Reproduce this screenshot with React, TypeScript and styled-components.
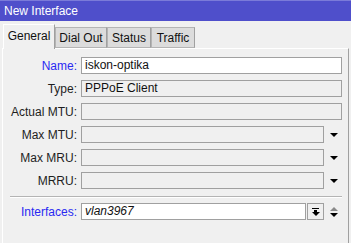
import React from "react";
import styled, { createGlobalStyle } from "styled-components";

const Global = createGlobalStyle`
  html, body { margin: 0; padding: 0; background: #f0f0f0; }
  body { font-family: "Liberation Sans", Arial, sans-serif; font-size: 11px; color: #1e1e1e; }
`;

const Window = styled.div`
  width: 351px;
  height: 243px;
  overflow: hidden;
  background: #f0f0f0;
  display: flex;
  flex-direction: column;
`;

const TitleBar = styled.div`
  height: 20px;
  border-top: 1px solid #7b7bd9;
  background: #4f4fcb;
  color: #fff;
  font-size: 12px;
  line-height: 20px;
  padding-left: 4px;
  flex: none;
`;

const TabStrip = styled.div`
  height: 27px;
  display: flex;
  align-items: flex-end;
  padding-left: 3px;
  flex: none;
  position: relative;
  z-index: 1;
`;

const Tab = styled.div<{ $active?: boolean; $w: number }>`
  box-sizing: border-box;
  width: ${(p) => p.$w}px;
  height: ${(p) => (p.$active ? 25 : 21)}px;
  margin-bottom: ${(p) => (p.$active ? -1 : 0)}px;
  background: ${(p) => (p.$active ? "#f0f0f0" : "#dcdcdc")};
  border: 1px solid ${(p) => (p.$active ? "#ffffff" : "#b4b4b4")};
  border-right-color: #a0a0a0;
  border-bottom: ${(p) => (p.$active ? "none" : "1px solid #b4b4b4")};
  display: flex;
  align-items: center;
  justify-content: center;
  font-size: 12px;
  color: #111;
  padding-bottom: ${(p) => (p.$active ? 2 : 0)}px;
`;

const Panel = styled.div`
  flex: 1;
  margin: 0 2px 0 2px;
  border-top: 1px solid #ffffff;
  border-left: 1px solid #ffffff;
  border-right: 1px solid #a0a0a0;
  padding: 8px 6px 0 0;
  display: flex;
  flex-direction: column;
  gap: 6px;
`;

const Row = styled.div`
  display: grid;
  grid-template-columns: 74px 1fr;
  column-gap: 4px;
  align-items: center;
  height: 17px;
`;

const Label = styled.div<{ $link?: boolean }>`
  text-align: right;
  font-size: 12px;
  color: ${(p) => (p.$link ? "#2a2af2" : "#1e1e1e")};
  white-space: nowrap;
`;

const Field = styled.div`
  display: flex;
  align-items: center;
  height: 17px;
`;

const Input = styled.div<{ $white?: boolean; $italic?: boolean }>`
  box-sizing: border-box;
  height: 17px;
  flex: 1;
  border: 1px solid #a0a0a0;
  background: ${(p) => (p.$white ? "#ffffff" : "#f0f0f0")};
  font-size: 12px;
  font-style: ${(p) => (p.$italic ? "italic" : "normal")};
  color: #111;
  padding-left: 3px;
  line-height: 15px;
  white-space: nowrap;
`;

const ArrowCell = styled.div`
  width: 18px;
  flex: none;
  display: flex;
  flex-direction: column;
  align-items: center;
  justify-content: center;
  gap: 2px;
  padding-left: 2px;
  box-sizing: border-box;
`;

const Tri = styled.div<{ $up?: boolean; $color?: string }>`
  width: 0;
  height: 0;
  border-left: 4px solid transparent;
  border-right: 4px solid transparent;
  ${(p) =>
    p.$up
      ? `border-bottom: 4px solid ${p.$color || "#000"};`
      : `border-top: 4px solid ${p.$color || "#000"};`}
`;

const IconButton = styled.div`
  box-sizing: border-box;
  width: 17px;
  height: 17px;
  margin-left: 1px;
  flex: none;
  border: 1px solid #a0a0a0;
  background: #f0f0f0;
  display: flex;
  flex-direction: column;
  align-items: center;
  justify-content: center;
  gap: 1px;
`;

const Bar = styled.div`
  width: 7px;
  height: 1px;
  background: #000;
`;

const Stem = styled.div`
  display: flex;
  flex-direction: column;
  align-items: center;
`;

const StemLine = styled.div`
  width: 3px;
  height: 2px;
  background: #000;
`;

const Separator = styled.div`
  margin: 1px 0 -1px 7px;
  height: 0;
  border-top: 1px solid #b4b4b4;
  border-bottom: 1px solid #ffffff;
`;

const tabs = [
  { name: "General", w: 52, active: true },
  { name: "Dial Out", w: 52 },
  { name: "Status", w: 44 },
  { name: "Traffic", w: 44 },
];

export default function App() {
  return (
    <Window>
      <Global />
      <TitleBar>New Interface</TitleBar>
      <TabStrip>
        {tabs.map((t) => (
          <Tab key={t.name} $active={t.active} $w={t.w}>
            {t.name}
          </Tab>
        ))}
      </TabStrip>
      <Panel>
        <Row>
          <Label $link>Name:</Label>
          <Field>
            <Input $white>iskon-optika</Input>
          </Field>
        </Row>
        <Row>
          <Label>Type:</Label>
          <Field>
            <Input>PPPoE Client</Input>
          </Field>
        </Row>
        <Row>
          <Label>Actual MTU:</Label>
          <Field>
            <Input />
          </Field>
        </Row>
        {["Max MTU:", "Max MRU:", "MRRU:"].map((l) => (
          <Row key={l}>
            <Label>{l}</Label>
            <Field>
              <Input />
              <ArrowCell>
                <Tri />
              </ArrowCell>
            </Field>
          </Row>
        ))}
        <Separator />
        <Row>
          <Label $link>Interfaces:</Label>
          <Field>
            <Input $white $italic>
              vlan3967
            </Input>
            <IconButton>
              <Bar />
              <Stem>
                <StemLine />
                <Tri />
              </Stem>
            </IconButton>
            <ArrowCell>
              <Tri $up $color="#8a8a8a" />
              <Tri />
            </ArrowCell>
          </Field>
        </Row>
      </Panel>
    </Window>
  );
}
